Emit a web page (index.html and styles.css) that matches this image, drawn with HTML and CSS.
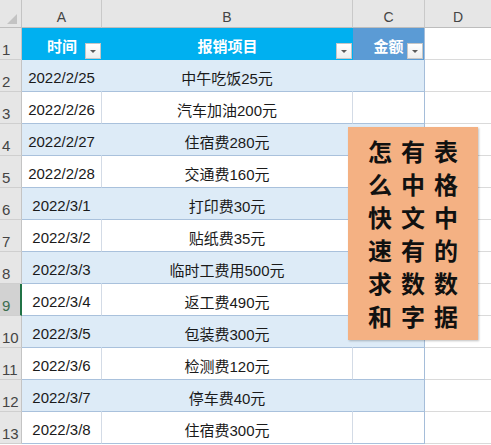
FILE: index.html
```html
<!DOCTYPE html>
<html lang="zh">
<head>
<meta charset="utf-8">
<title>报销</title>
<link rel="stylesheet" href="styles.css">
</head>
<body>
<div class="page">
  <div class="sheet">
    <div class="corner"><span class="tri"></span></div>
    <div class="colh">A</div>
    <div class="colh">B</div>
    <div class="colh">C</div>
    <div class="colh last">D</div>

    <div class="rowh">1</div>
    <div class="hd hd-a">时间<span class="flt"></span></div>
    <div class="hd hd-b">报销项目<span class="flt"></span></div>
    <div class="hd hd-c">金额<span class="flt"></span></div>
    <div class="d"></div>

    <div class="rowh">2</div>
    <div class="c band a">2022/2/25</div>
    <div class="c band b">中午吃饭25元</div>
    <div class="c band cc"></div>
    <div class="d"></div>

    <div class="rowh">3</div>
    <div class="c a">2022/2/26</div>
    <div class="c b">汽车加油200元</div>
    <div class="c cc"></div>
    <div class="d"></div>

    <div class="rowh">4</div>
    <div class="c band a">2022/2/27</div>
    <div class="c band b">住宿费280元</div>
    <div class="c band cc"></div>
    <div class="d"></div>

    <div class="rowh">5</div>
    <div class="c a">2022/2/28</div>
    <div class="c b">交通费160元</div>
    <div class="c cc"></div>
    <div class="d"></div>

    <div class="rowh">6</div>
    <div class="c band a">2022/3/1</div>
    <div class="c band b">打印费30元</div>
    <div class="c band cc"></div>
    <div class="d"></div>

    <div class="rowh">7</div>
    <div class="c a">2022/3/2</div>
    <div class="c b">贴纸费35元</div>
    <div class="c cc"></div>
    <div class="d"></div>

    <div class="rowh">8</div>
    <div class="c band a">2022/3/3</div>
    <div class="c band b">临时工费用500元</div>
    <div class="c band cc"></div>
    <div class="d"></div>

    <div class="rowh sel">9</div>
    <div class="c a">2022/3/4</div>
    <div class="c b">返工费490元</div>
    <div class="c cc"></div>
    <div class="d"></div>

    <div class="rowh">10</div>
    <div class="c band a">2022/3/5</div>
    <div class="c band b">包装费300元</div>
    <div class="c band cc"></div>
    <div class="d"></div>

    <div class="rowh">11</div>
    <div class="c a">2022/3/6</div>
    <div class="c b">检测费120元</div>
    <div class="c cc"></div>
    <div class="d"></div>

    <div class="rowh">12</div>
    <div class="c band a">2022/3/7</div>
    <div class="c band b">停车费40元</div>
    <div class="c band cc"></div>
    <div class="d"></div>

    <div class="rowh">13</div>
    <div class="c a">2022/3/8</div>
    <div class="c b">住宿费300元</div>
    <div class="c cc"></div>
    <div class="d"></div>
  </div>

  <div class="note">
    <div class="note-text">表格中的数据<br>有中文有数字<br>怎么快速求和</div>
  </div>
</div>
</body>
</html>
```

FILE: styles.css
```css
html, body {
  margin: 0;
  padding: 0;
  background: #ffffff;
  overflow: hidden;
}

.page {
  position: relative;
  width: 491px;
  height: 445px;
}

.sheet {
  display: grid;
  grid-template-columns: 22px 80px 251px 72px 1fr;
  grid-template-rows: 28px repeat(13, 32px);
  font-family: "Liberation Sans", "Noto Sans CJK SC", sans-serif;
  font-size: 15px;
  color: #1a1a1a;
}

.sheet > div {
  box-sizing: border-box;
}

/* column headers */
.corner {
  position: relative;
  background: #e6e6e6;
  border-right: 1px solid #c4c4c4;
  border-bottom: 1px solid #bdbdbd;
}
.tri {
  position: absolute;
  right: 4px;
  bottom: 3px;
  width: 0;
  height: 0;
  border-left: 10px solid transparent;
  border-bottom: 10px solid #c3c3c3;
}
.colh {
  background: #e6e6e6;
  border-right: 1px solid #c9c9c9;
  border-bottom: 1px solid #bdbdbd;
  display: flex;
  align-items: flex-end;
  justify-content: center;
  padding-bottom: 2px;
  font-size: 14px;
  color: #444444;
}
.colh.last {
  border-right: none;
}

/* row headers */
.rowh {
  background: #e6e6e6;
  border-right: 1px solid #c4c4c4;
  border-bottom: 1px solid #cfcfcf;
  display: flex;
  align-items: flex-end;
  padding-left: 2px;
  padding-bottom: 1px;
  font-size: 15px;
  color: #444444;
}
.rowh.sel {
  background: #d2d2d2;
  color: #3b6e4f;
  border-right: 2px solid #217346;
}

/* table header */
.hd {
  position: relative;
  display: flex;
  align-items: center;
  justify-content: center;
  padding-top: 3px;
  color: #ffffff;
  font-weight: bold;
  font-family: "Noto Sans CJK SC", sans-serif;
  font-size: 15px;
}
.hd-a, .hd-b {
  background: #00b0f0;
}
.hd-c {
  background: #5b9bd5;
  border-right: 1px solid #a5bdd9;
}
.flt {
  position: absolute;
  right: 1px;
  bottom: 1px;
  width: 16px;
  height: 16px;
  box-sizing: border-box;
  background: linear-gradient(#ffffff, #eeeeee);
  border: 1px solid #c6c6c6;
  display: flex;
  align-items: center;
  justify-content: center;
}
.flt::after {
  content: "";
  width: 0;
  height: 0;
  border-left: 3px solid transparent;
  border-right: 3px solid transparent;
  border-top: 3px solid #5a5a5a;
  margin-top: 1px;
}

/* data cells */
.c {
  display: flex;
  align-items: center;
  justify-content: center;
  padding-top: 3px;
  background: #ffffff;
  border-right: 1px solid #d3dbe6;
  border-bottom: 1px solid #a9c1dc;
  white-space: nowrap;
}
.c.band {
  background: #ddebf7;
  border-right-color: #ddebf7;
}
.c.cc {
  border-right-color: #a5bdd9;
}

.d {
  background: #ffffff;
  border-bottom: 1px solid #dadada;
}

/* overlay note */
.note {
  position: absolute;
  left: 348px;
  top: 127px;
  width: 130px;
  height: 213px;
  box-sizing: border-box;
  padding-top: 13px;
  display: flex;
  justify-content: center;
  align-items: flex-start;
  background: #f4b183;
  box-shadow: 1px 1px 2px rgba(0, 0, 0, 0.25);
}
.note-text {
  writing-mode: vertical-rl;
  font-family: "Noto Sans CJK SC", sans-serif;
  font-weight: bold;
  font-size: 24px;
  line-height: 33px;
  letter-spacing: 9px;
  color: #111111;
}
```
